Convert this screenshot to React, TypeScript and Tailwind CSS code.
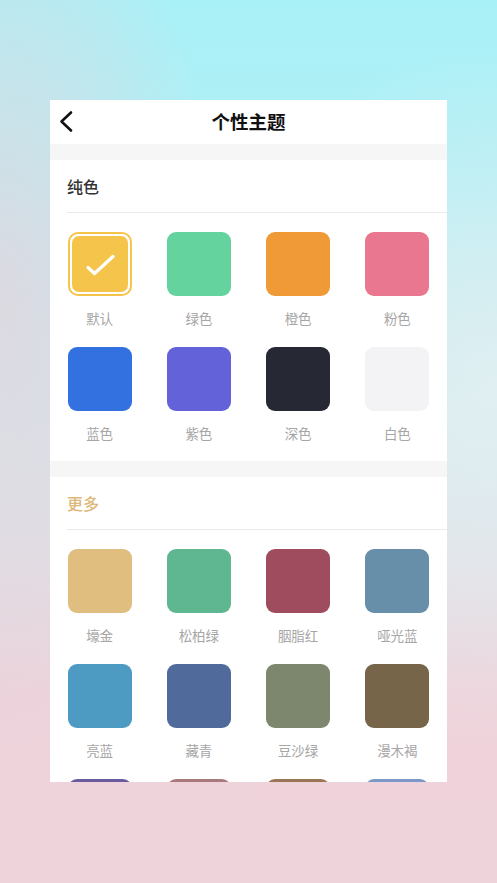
import React from 'react';

interface Swatch {
  name: string;
  color: string;
}

const basicColors: Swatch[] = [
  { name: '默认', color: '#f5c44a' },
  { name: '绿色', color: '#64d39e' },
  { name: '橙色', color: '#f09a37' },
  { name: '粉色', color: '#e8778f' },
  { name: '蓝色', color: '#3370e0' },
  { name: '紫色', color: '#6362d9' },
  { name: '深色', color: '#262833' },
  { name: '白色', color: '#f3f3f5' },
];

const moreColors: Swatch[] = [
  { name: '壕金', color: '#dfbe80' },
  { name: '松柏绿', color: '#5eb791' },
  { name: '胭脂红', color: '#9e4c5e' },
  { name: '哑光蓝', color: '#678fa9' },
  { name: '亮蓝', color: '#4d9ac2' },
  { name: '藏青', color: '#506b9b' },
  { name: '豆沙绿', color: '#7c876e' },
  { name: '漫木褐', color: '#766548' },
  { name: '', color: '#6b5c9f' },
  { name: '', color: '#a87a7d' },
  { name: '', color: '#9b7656' },
  { name: '', color: '#7b98c9' },
];

const SwatchItem: React.FC<{ swatch: Swatch; selected?: boolean }> = ({ swatch, selected }) => (
  <div className="flex flex-col items-center">
    {selected ? (
      <div className="w-16 h-16 rounded-[10px] border-2 border-[#f5c44a] bg-white p-[2px]">
        <div className="w-full h-full rounded-[7px] bg-[#f5c44a] relative">
          <svg className="absolute -left-[4px] -top-[4px]" width="64" height="64" viewBox="0 0 64 64" fill="none">
            <polyline
              points="20,35.5 26.5,41.5 45,24.5"
              stroke="#ffffff"
              strokeWidth="3.3"
              strokeLinecap="round"
              strokeLinejoin="round"
            />
          </svg>
        </div>
      </div>
    ) : (
      <div className="w-16 h-16 rounded-[9px]" style={{ backgroundColor: swatch.color }} />
    )}
    <div className="mt-[13px] h-[18px] leading-[18px] text-[13.5px] text-[#a6a6a6]">{swatch.name}</div>
  </div>
);

const Section: React.FC<{ title: string; titleClass: string; items: Swatch[]; selectedIndex?: number }> = ({
  title,
  titleClass,
  items,
  selectedIndex,
}) => (
  <div className="bg-white">
    <div className="ml-[17px] h-[52px] flex items-center border-b border-[#ebebeb] box-content">
      <span className={`text-[16px] font-medium ${titleClass}`}>{title}</span>
    </div>
    <div className="grid grid-cols-4 gap-y-[20px] pt-[19px] pb-[19px]">
      {items.map((s, i) => (
        <SwatchItem key={s.color} swatch={s} selected={i === selectedIndex} />
      ))}
    </div>
  </div>
);

export default function App() {
  return (
    <div
      className="w-full h-[883px] overflow-hidden pt-[100px] px-[50px] bg-[radial-gradient(ellipse_45%_55%_at_0%_35%,rgba(222,216,224,0.95),rgba(222,216,224,0)),radial-gradient(ellipse_60%_40%_at_100%_45%,rgba(225,240,242,0.9),rgba(225,240,242,0)),linear-gradient(180deg,#a8f1f7_0%,#b2eff5_22%,#d9e6ec_50%,#e6dbe2_66%,#efd2da_78%,#efd3db_100%)]"
      style={{ fontFamily: '"Noto Sans CJK SC", "Noto Sans", sans-serif' }}
    >
      <div className="w-[397px] h-[682px] bg-white overflow-hidden">
        {/* Header */}
        <div className="h-[44px] relative flex items-center justify-center">
          <svg className="absolute left-[8px] top-[10px]" width="18" height="24" viewBox="0 0 18 24" fill="none">
            <polyline
              points="13,2.5 3.5,11.5 13,20.5"
              stroke="#111111"
              strokeWidth="2.6"
              strokeLinecap="round"
              strokeLinejoin="round"
            />
          </svg>
          <span className="text-[18.5px] font-bold text-[#111111]">个性主题</span>
        </div>

        <div className="h-4 bg-[#f6f6f7]" />
        <Section title="纯色" titleClass="text-[#333333]" items={basicColors} selectedIndex={0} />

        <div className="h-4 bg-[#f6f6f7]" />
        <Section title="更多" titleClass="text-[#dcb87a]" items={moreColors} />
      </div>
    </div>
  );
}
